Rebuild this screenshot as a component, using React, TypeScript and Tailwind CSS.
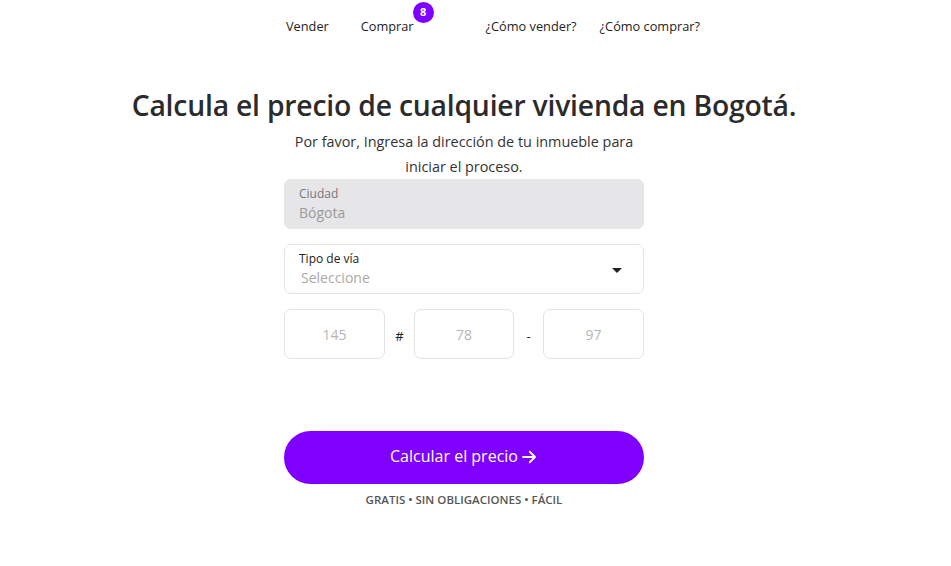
import React from "react";

export default function App() {
  return (
    <div className="min-h-[566px] w-[951px] bg-white text-[#2b2b2b]" style={{ fontFamily: '"Open Sans", sans-serif' }}>
      <nav className="flex h-[52px] items-center pl-[286px] text-[12.75px] text-[#222]">
        <span className="pt-[1px]">Vender</span>
        <span className="relative ml-[32px] pt-[1px]">
          Comprar
          <span className="absolute left-[52px] top-[-14px] flex h-[21px] w-[21px] items-center justify-center rounded-full bg-[#8000ff] text-[11px] font-bold text-white">8</span>
        </span>
        <span className="ml-[72px] pt-[1px]">¿Cómo vender?</span>
        <span className="ml-[23px] pt-[1px]">¿Cómo comprar?</span>
      </nav>
      <main className="flex w-[928px] flex-col items-center">
        <h1 className="mt-[33px] text-[28.3px] font-semibold leading-[40px] tracking-[-0.2px] text-[#2b2b2b]">
          Calcula el precio de cualquier vivienda en Bogotá.
        </h1>
        <p className="mt-[4px] w-[370px] text-center text-[14.4px] leading-[25px] text-[#333]">
          Por favor, Ingresa la dirección de tu inmueble para iniciar el proceso.
        </p>
        <div className="flex w-[360px] flex-col">
          <div className="flex h-[50px] flex-col justify-center rounded-[7px] bg-[#e6e6e8] px-[15px]">
            <span className="text-[12px] leading-[16px] text-[#777]">Ciudad</span>
            <span className="mt-[2px] text-[14px] leading-[18px] text-[#9a9a9a]">Bógota</span>
          </div>
          <div className="relative mt-[15px] flex h-[50px] flex-col justify-center rounded-[7px] border border-[#e4e4e4] bg-white px-[14px]">
            <span className="text-[12px] leading-[16px] text-[#222]">Tipo de vía</span>
            <span className="mt-[2px] pl-[2px] text-[14px] leading-[18px] text-[#a9a9a9]">Seleccione</span>
            <span className="absolute right-[21px] top-[23px] h-0 w-0 border-x-[5px] border-t-[5px] border-x-transparent border-t-[#222]" />
          </div>
          <div className="mt-[15px] flex items-center">
            <div className="flex h-[50px] w-[101px] items-center justify-center rounded-[7px] border border-[#e4e4e4] text-[14px] text-[#b5b5b5]">145</div>
            <span className="flex w-[29px] justify-center pt-[6px] text-[13px] text-[#222]">#</span>
            <div className="flex h-[50px] w-[100px] items-center justify-center rounded-[7px] border border-[#e4e4e4] text-[14px] text-[#b5b5b5]">78</div>
            <span className="flex w-[29px] justify-center pt-[6px] text-[13px] text-[#222]">-</span>
            <div className="flex h-[50px] w-[101px] items-center justify-center rounded-[7px] border border-[#e4e4e4] text-[14px] text-[#b5b5b5]">97</div>
          </div>
          <button className="mt-[72px] flex h-[53px] items-center justify-center rounded-full bg-[#8000ff] pb-[3px] text-[16px] text-white">
            <span>Calcular el precio</span>
            <svg width="18" height="18" viewBox="0 0 24 24" fill="none" stroke="white" strokeWidth="2.4" strokeLinecap="round" strokeLinejoin="round" className="ml-[2px] mt-[1px]">
              <path d="M4 12h15" />
              <path d="M13 5l7 7-7 7" />
            </svg>
          </button>
          <p className="mt-[8px] text-center text-[11.5px] font-semibold leading-[16px] text-[#555]">GRATIS • SIN OBLIGACIONES • FÁCIL</p>
        </div>
      </main>
    </div>
  );
}
